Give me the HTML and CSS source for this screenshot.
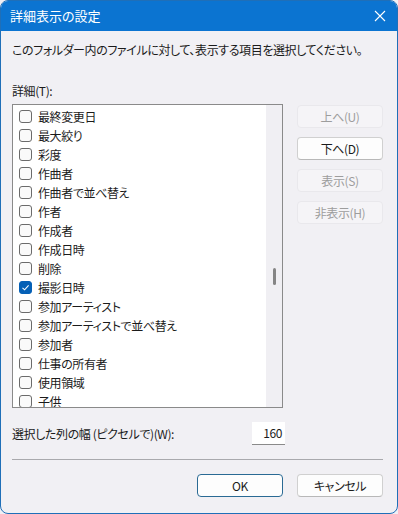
FILE: index.html
```html
<!DOCTYPE html>
<html lang="ja">
<head>
    <meta charset="UTF-8">
    <meta name="viewport" content="width=device-width, initial-scale=1.0">
    <title>詳細表示の設定</title>
    <link rel="stylesheet" href="styles.css">
</head>
<body>
    <div class="window">
        <div class="titlebar">
            <span class="title">詳細表示の設定</span>
            <svg class="close" width="12" height="12" viewBox="0 0 12 12">
                <path d="M1 1 L11 11 M11 1 L1 11" stroke="#fff" stroke-width="1.1" fill="none"/>
            </svg>
        </div>

        <div class="content">
            <p class="intro">このフォルダー内のファイルに対して、表示する項目を選択してください。</p>
            <p class="label">詳細(T):</p>

            <div class="main">
                <div class="listbox">
                    <ul class="items">
                        <li><span class="check"></span>最終変更日</li>
                        <li><span class="check"></span>最大絞り</li>
                        <li><span class="check"></span>彩度</li>
                        <li><span class="check"></span>作曲者</li>
                        <li><span class="check"></span>作曲者で並べ替え</li>
                        <li><span class="check"></span>作者</li>
                        <li><span class="check"></span>作成者</li>
                        <li><span class="check"></span>作成日時</li>
                        <li><span class="check"></span>削除</li>
                        <li><span class="check checked">
                            <svg width="9" height="9" viewBox="0 0 9 9"><path d="M1.5 4.8 L3.6 6.8 L7.6 2.4" stroke="#fff" stroke-width="1.1" fill="none"/></svg>
                        </span>撮影日時</li>
                        <li><span class="check"></span>参加アーティスト</li>
                        <li><span class="check"></span>参加アーティストで並べ替え</li>
                        <li><span class="check"></span>参加者</li>
                        <li><span class="check"></span>仕事の所有者</li>
                        <li><span class="check"></span>使用領域</li>
                        <li><span class="check"></span>子供</li>
                    </ul>
                    <div class="scrollbar"><span class="thumb"></span></div>
                </div>

                <div class="side">
                    <button class="btn" disabled>上へ(U)</button>
                    <button class="btn">下へ(D)</button>
                    <button class="btn" disabled>表示(S)</button>
                    <button class="btn" disabled>非表示(H)</button>
                </div>
            </div>

            <div class="width-row">
                <span>選択した列の幅 (ピクセルで)(W):</span>
                <span class="num">160</span>
            </div>

            <hr class="sep">

            <div class="footer">
                <button class="btn default">OK</button>
                <button class="btn">キャンセル</button>
            </div>
        </div>
    </div>
</body>
</html>
```

FILE: styles.css
```css
* {
    box-sizing: border-box;
}
body {
    margin: 0;
    font-family: "Noto Sans CJK JP", "Noto Sans", sans-serif;
    font-size: 12px;
    font-feature-settings: "palt";
    letter-spacing: -0.4px;
    color: #1b1b1b;
    background: #f0eff4;
}
p {
    margin: 0;
}
.window {
    width: 398px;
    height: 514px;
    border: 1px solid #1f6fb8;
    border-radius: 8px;
    overflow: hidden;
    background: #f1f0f4;
}
.titlebar {
    height: 30px;
    background: #0b74d1;
    display: flex;
    align-items: center;
    justify-content: space-between;
    padding: 0 9px 0 9px;
}
.title {
    color: #fff;
    font-size: 13px;
    line-height: 16px;
    letter-spacing: 0;
}
.close {
    margin-right: 2px;
}
.content {
    padding: 11px 14px 0 11px;
}
.intro {
    line-height: 16px;
    white-space: nowrap;
}
.label {
    margin-top: 25px;
    line-height: 16px;
}
.main {
    display: flex;
    gap: 14px;
    margin-top: 5px;
}
.listbox {
    width: 273px;
    height: 304px;
    border: 1px solid #8a8a8a;
    background: #fff;
    display: flex;
    overflow: hidden;
}
.items {
    list-style: none;
    margin: 0;
    padding: 2px 0 0 6px;
    flex: 1;
}
.items li {
    height: 19px;
    display: flex;
    align-items: center;
    line-height: 16px;
}
.check {
    width: 13px;
    height: 13px;
    border: 1px solid #6b6b6b;
    border-radius: 3px;
    background: #fafafa;
    margin-right: 6px;
    display: flex;
    align-items: center;
    justify-content: center;
}
.check.checked {
    background: #0560b6;
    border-color: #0560b6;
}
.scrollbar {
    width: 16px;
    background: #f0eff3;
    display: flex;
    justify-content: center;
    padding-top: 163px;
}
.thumb {
    width: 3px;
    height: 17px;
    border-radius: 2px;
    background: #858585;
}
.side {
    display: flex;
    flex-direction: column;
    gap: 9px;
    padding-top: 1px;
}
.btn {
    width: 86px;
    height: 23px;
    font-family: inherit;
    font-size: 12px;
    font-feature-settings: "palt";
    letter-spacing: -0.4px;
    color: #1b1b1b;
    background: #fdfdfd;
    border: 1px solid #d0d0d0;
    border-bottom-color: #b8b8b8;
    border-radius: 4px;
    padding: 0;
}
.btn:disabled {
    background: #f5f4f7;
    border-color: #e9e8ec;
    color: #9d9d9d;
}
.btn.default {
    border: 1px solid #2a6a94;
}
.width-row {
    display: flex;
    justify-content: space-between;
    align-items: center;
    margin-top: 14px;
    width: 273px;
    height: 23px;
}
.num {
    width: 33px;
    height: 23px;
    background: #fff;
    border-bottom: 1px solid #8a8a8a;
    text-align: right;
    padding-right: 3px;
    line-height: 22px;
}
.sep {
    border: 0;
    border-top: 1px solid #a9a9ad;
    margin: 14px 0 0 0;
}
.footer {
    display: flex;
    justify-content: flex-end;
    gap: 14px;
    margin-top: 14px;
}
```
